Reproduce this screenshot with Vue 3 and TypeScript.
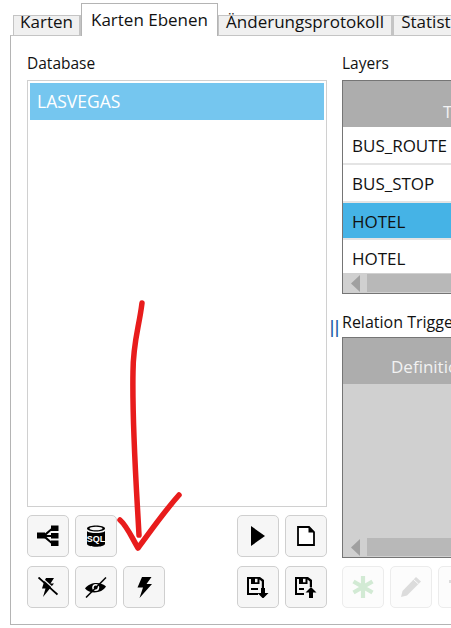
<script setup lang="ts">
const tabs = [
  { label: 'Karten', active: false, w: 68 },
  { label: 'Karten Ebenen', active: true, w: 137 },
  { label: 'Änderungsprotokoll', active: false, w: 175 },
  { label: 'Statistik', active: false, w: 80 },
]
const layers = [
  { name: 'BUS_ROUTE', selected: false },
  { name: 'BUS_STOP', selected: false },
  { name: 'HOTEL', selected: true },
  { name: 'HOTEL', selected: false },
]
</script>

<template>
  <div class="window">
    <div class="tabs">
      <div
        v-for="t in tabs"
        :key="t.label"
        class="tab"
        :class="{ active: t.active }"
        :style="{ width: t.w + 'px' }"
      >{{ t.label }}</div>
    </div>
    <div class="panel">
      <div class="left">
        <div class="label">Database</div>
        <div class="dblist">
          <div class="dbitem">LASVEGAS</div>
        </div>
        <div class="toolrow tr1">
          <div class="group">
            <button class="btn">
              <svg width="22" height="22" viewBox="0 0 22 22"><path d="M0 7.500h8v6H0z" /><path d="M7 9.300 15 2.500v2.600L9.500 10h6v2h-6l5.500 4.900v2.600L7 12.700z" /><rect x="14" y="0.500" width="7.500" height="5.500" /><rect x="14" y="8" width="7.500" height="5.500" /><rect x="14" y="15.500" width="7.500" height="5.500" /></svg>
            </button>
            <button class="btn">
              <svg width="20" height="22" viewBox="0 0 20 22"><path d="M1 3.500C1 -.5 19 -.5 19 3.500S1 7.500 1 3.500z" /><ellipse cx="10" cy="3.500" rx="6.500" ry="1.700" fill="#f6f6f6" /><path d="M1 6c2 2.800 16 2.800 18 0v13c-1.500 3.700-16.500 3.700-18 0z" /><text x="10" y="16.500" class="sql">SQL</text></svg>
            </button>
          </div>
          <div class="group">
            <button class="btn">
              <svg width="14" height="20" viewBox="0 0 14 20"><path d="M0 0 14 10 0 20z" /></svg>
            </button>
            <button class="btn">
              <svg width="18" height="20" viewBox="0 0 18 20"><path d="M1 1h11l5 5v13H1z" fill="#fff" stroke="#000" stroke-width="1.800" /><path d="M11.500 1v5.500H17z" fill="#000" /></svg>
            </button>
          </div>
        </div>
        <div class="toolrow tr2">
          <div class="group">
            <button class="btn">
              <svg width="20" height="21" viewBox="0 0 20 21"><path d="M8 1h8l-3.500 5.500H16L5 20l2.500-8.500H4L6 5z" /><path d="M.5 .5 19.500 17.500" stroke="#000" stroke-width="1.900" /><path d="M3 0 19 14.500" stroke="#f6f6f6" stroke-width="1.200" /></svg>
            </button>
            <button class="btn">
              <svg width="22" height="21" viewBox="0 0 22 21"><path d="M0 11.500C4 5 16 4 21 9.500 17 16.500 5 17.500 0 11.500z" /><circle cx="10.700" cy="10.500" r="3.500" fill="#f6f6f6" /><circle cx="10.700" cy="10.500" r="1.900" /><path d="M1 20.500 21 .5" stroke="#000" stroke-width="1.500" /></svg>
            </button>
            <button class="btn">
              <svg width="15" height="21" viewBox="0 0 15 21"><path d="M5 0h9.500L9.500 7h5.500L2.500 21l3.500-10.500H0.500z" /></svg>
            </button>
          </div>
          <div class="group">
            <button class="btn">
              <svg width="22" height="21" viewBox="0 0 22 21"><path d="M0 0h13l4 3v8h-2.200V4.500L12.500 2.500V7H4V2H2v14h9v2H0z" /><path d="M8 1.800h2.500v3.500H8z" fill="#f6f6f6" /><path d="M4 11h7v2H4z" /><path d="M14 11h4v5h3.500L16 21.500 10.500 16H14z" /></svg>
            </button>
            <button class="btn">
              <svg width="22" height="21" viewBox="0 0 22 21"><path d="M0 0h13l4 3v7h-2.200V4.500L12.500 2.500V7H4V2H2v14h7v2H0z" /><path d="M8 1.800h2.500v3.500H8z" fill="#f6f6f6" /><path d="M4 11h5v2H4z" /><path d="M16 10l5.500 5.500H18V21h-4v-5.500h-3.500z" /></svg>
            </button>
          </div>
        </div>
      </div>
      <div class="splitter">||</div>
      <div class="right">
        <div class="label">Layers</div>
        <div class="gridbox layersbox">
          <div class="gridhead layershead">T</div>
          <div
            v-for="(l, i) in layers"
            :key="i"
            class="row"
            :class="{ selected: l.selected }"
          >{{ l.name }}</div>
          <div class="hscroll">
            <svg width="9" height="17" viewBox="0 0 9 17"><path d="M9 0v17L0 8.500z" /></svg>
            <div class="thumb"></div>
          </div>
        </div>
        <div class="label rel">Relation Trigger</div>
        <div class="gridbox relbox">
          <div class="gridhead relhead">Definition</div>
          <div class="hscroll">
            <svg width="9" height="17" viewBox="0 0 9 17"><path d="M9 0v17L0 8.500z" /></svg>
            <div class="thumb"></div>
          </div>
        </div>
        <div class="toolrow tr3">
          <button class="btn off">
            <svg width="22" height="22" viewBox="0 0 22 22"><g stroke="#d2ead4" stroke-width="4.200"><path d="M11 0v22M1.500 5.500l19 11M1.500 16.500l19-11" /></g></svg>
          </button>
          <button class="btn off">
            <svg width="22" height="22" viewBox="0 0 22 22"><path d="M16 1 21 5.500 7 19.500 1 21l1.500-6z" fill="#dcdcdc" /><path d="M13.500 3.500l5 4.500" stroke="#fcfcfc" stroke-width="1" /></svg>
          </button>
          <button class="btn off">
            <svg width="21" height="21" viewBox="0 0 21 21"><path d="M0 3h21v3H0zM3 7h15v14H3z" fill="#dcdcdc" /></svg>
          </button>
        </div>
      </div>
    </div>
    <svg class="arrow" width="451" height="628" viewBox="0 0 451 628">
      <path d="M142 303C139 328 133 342 133 372C132 425 136 480 139 535" />
      <path d="M120 520C127 526 132 538 138 548C150 532 163 513 179 495" />
    </svg>
  </div>
</template>

<style>
html, body { margin: 0; background: #fff; }
</style>

<style scoped>
.window {
  position: relative;
  width: 451px;
  height: 628px;
  overflow: hidden;
  background: #fff;
  font-family: "Open Sans", "Noto Sans", "Liberation Sans", sans-serif;
  font-size: 15.5px;
  color: #111;
}
.tabs {
  display: flex;
  height: 35px;
  padding-left: 13px;
  align-items: flex-end;
  width: 600px;
  position: relative;
  z-index: 1;
}
.tab {
  box-sizing: border-box;
  flex: none;
  height: 20px;
  background: #f0f0f0;
  border: 1px solid #c4c4c4;
  border-bottom: 0;
  border-right-width: 2px;
  text-align: center;
  line-height: 12px;
  font-size: 17px;
  white-space: nowrap;
}
.tab.active {
  height: 33px;
  margin-bottom: -1px;
  background: #fff;
  border: 1px solid #b4b4b4;
  border-bottom: 0;
  line-height: 31px;
}
.panel {
  box-sizing: border-box;
  margin-left: 10px;
  width: 620px;
  height: 590px;
  border: 1px solid #b4b4b4;
  border-top: 1px solid #c4c4c4;
  background: #fff;
  display: flex;
  padding-left: 16px;
}
.left {
  width: 300px;
  flex: none;
}
.label {
  height: 21px;
  margin-top: 17px;
  line-height: 21px;
  font-size: 15.5px;
}
.dblist {
  box-sizing: border-box;
  margin-top: 6px;
  height: 427px;
  border: 1px solid #d0d0d0;
  padding: 2px;
}
.dbitem {
  height: 37px;
  background: #75c6ef;
  color: #fff;
  padding-left: 7px;
  line-height: 37px;
  font-size: 17.5px;
}
.toolrow {
  display: flex;
  justify-content: space-between;
}
.tr1 { margin-top: 8px; }
.tr2 { margin-top: 9px; }
.group {
  display: flex;
  gap: 6px;
}
.btn {
  box-sizing: border-box;
  flex: none;
  width: 42px;
  height: 42px;
  padding: 0;
  background: #f6f6f6;
  border: 1px solid #cfcfcf;
  border-radius: 5px;
  display: flex;
  align-items: center;
  justify-content: center;
}
.btn.off {
  background: #fcfcfc;
  border-color: #ececec;
}
.sql {
  font: bold 9px "Liberation Sans", sans-serif;
  fill: #fff;
  text-anchor: middle;
}
.splitter {
  width: 15px;
  flex: none;
  margin-top: 281px;
  height: 20px;
  line-height: 20px;
  font-family: "Liberation Sans", sans-serif;
  font-size: 19px;
  color: #1f5fa8;
  text-align: center;
}
.right {
  width: 300px;
  flex: none;
}
.gridbox {
  position: relative;
  box-sizing: border-box;
  border: 1px solid #757575;
  overflow: hidden;
}
.layersbox {
  margin-top: 6px;
  height: 214px;
}
.gridhead {
  background: #adadad;
  color: #f2f2f2;
  height: 46px;
  font-size: 17px;
}
.layershead {
  padding: 19px 0 0 100px;
  box-sizing: border-box;
}
.row {
  box-sizing: border-box;
  height: 38px;
  line-height: 37px;
  padding-left: 9px;
  font-size: 17px;
  background: #fff;
  border-bottom: 2px solid #e4e4e4;
}
.row:nth-of-type(4) { height: 37px; }
.row.selected {
  background: #45b3e6;
}
.hscroll {
  position: absolute;
  left: 0;
  right: 0;
  bottom: 0;
  height: 20px;
  background: #d0d0d0;
  display: flex;
  align-items: center;
  padding-left: 8px;
  gap: 7px;
}
.hscroll path { fill: #a0a0a0; }
.thumb {
  flex: 1;
  height: 18px;
  background: #b8b8b8;
}
.rel { height: 20px; line-height: 20px; margin-top: 18px; font-size: 16px; }
.relbox {
  margin-top: 5px;
  height: 221px;
  background: #d0d0d0;
}
.relhead {
  line-height: 58px;
  padding-left: 48px;
  box-sizing: border-box;
}
.tr3 {
  margin-top: 8px;
  justify-content: flex-start;
  gap: 6px;
}
.arrow {
  position: absolute;
  left: 0;
  top: 0;
  pointer-events: none;
  z-index: 2;
}
.arrow path {
  fill: none;
  stroke: #e81c1c;
  stroke-width: 5.5;
  stroke-linecap: round;
  stroke-linejoin: round;
}
</style>
